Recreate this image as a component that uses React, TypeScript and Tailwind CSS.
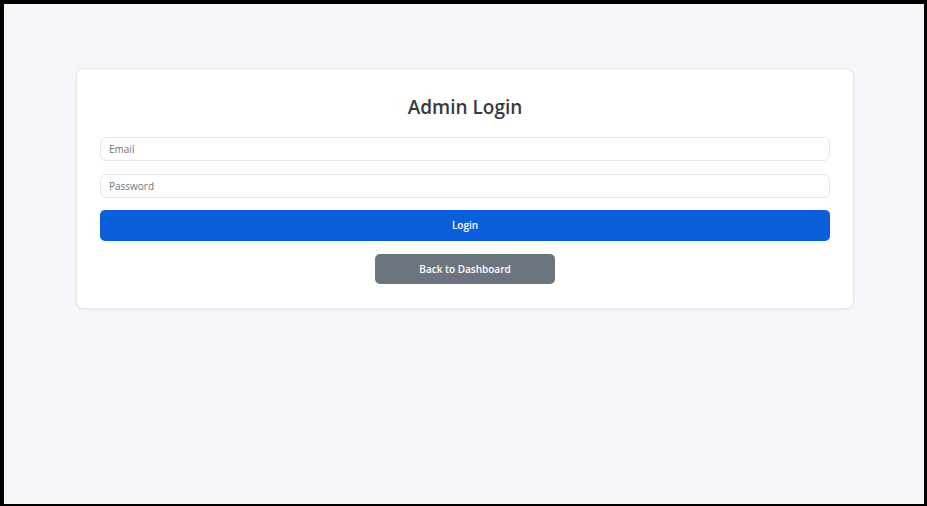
export default function App() {
  return (
    <div className="h-[506px] w-[927px] border-b-2 border-l-4 border-r-[3px] border-t-4 border-black bg-[#f5f6fa] font-['Open_Sans',sans-serif]">
      <div className="pt-[64px]">
        <form
          onSubmit={(e) => e.preventDefault()}
          className="ml-[72px] w-[778px] rounded-lg border border-[#e3e5ea] bg-white px-[23px] pb-[24px] pt-[25px] shadow-[0_1px_3px_rgba(0,0,0,0.05)]"
        >
          <h1 className="mb-[17px] text-center text-[19px] font-semibold leading-[26px] text-[#343a40]">
            Admin Login
          </h1>
          <input
            type="email"
            placeholder="Email"
            className="mb-[13px] block h-[24px] w-full rounded-md border border-[#e6e7eb] bg-white px-[8px] text-[10px] text-[#495057] placeholder:text-[#6c757d] focus:outline-none"
          />
          <input
            type="password"
            placeholder="Password"
            className="mb-[12px] block h-[24px] w-full rounded-md border border-[#e6e7eb] bg-white px-[8px] text-[10px] text-[#495057] placeholder:text-[#6c757d] focus:outline-none"
          />
          <button
            type="submit"
            className="block h-[31px] w-full rounded-[5px] bg-[#0b5fdc] text-[10px] font-semibold text-white"
          >
            Login
          </button>
          <div className="mt-[13px] flex justify-center">
            <button
              type="button"
              className="h-[30px] w-[180px] rounded-[5px] bg-[#6c757d] text-[10px] font-semibold text-white"
            >
              Back to Dashboard
            </button>
          </div>
        </form>
      </div>
    </div>
  );
}
